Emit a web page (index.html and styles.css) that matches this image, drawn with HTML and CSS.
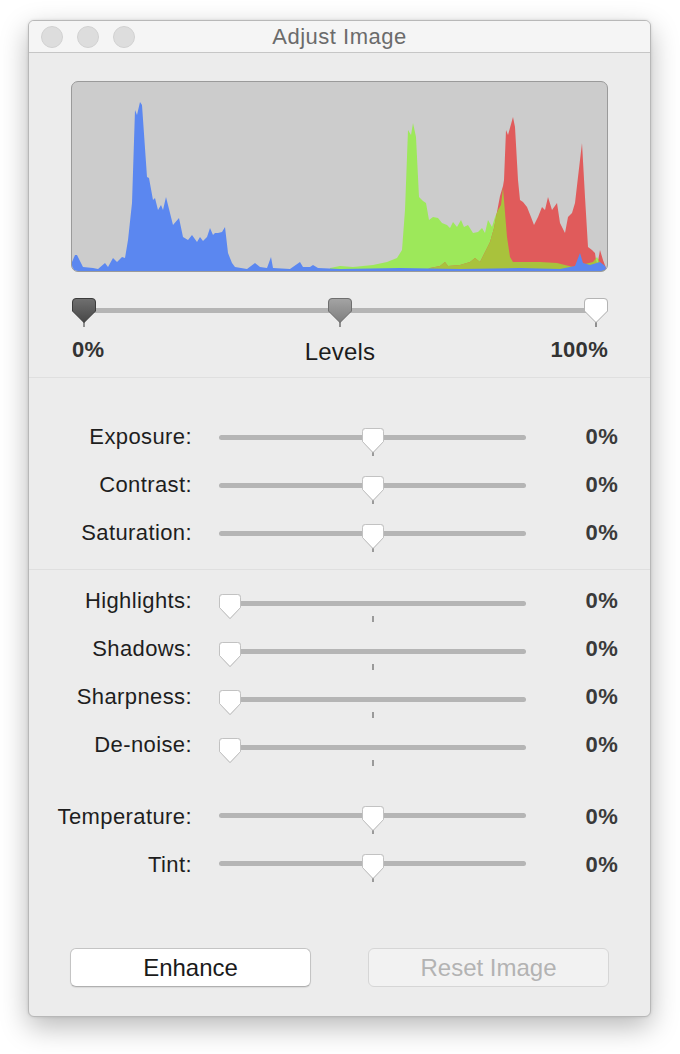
FILE: index.html
```html
<!DOCTYPE html>
<html>
<head>
<meta charset="utf-8">
<title>Adjust Image</title>
<link rel="stylesheet" href="styles.css">
</head>
<body>
<div class="window">
  <div class="titlebar">
    <div class="lights"><span class="light"></span><span class="light"></span><span class="light"></span></div>
    <div class="title">Adjust Image</div>
    <div></div>
  </div>

  <div class="histogram">
    <svg class="hist-svg" viewBox="72 82 535 189" preserveAspectRatio="none">
      <defs>
        <clipPath id="redclip">
          <path d="M425,271 L430,268 L440,266 L445,262 L448,266 L460,265 L470,262 L475,258 L480,262 L485,252 L490,242 L494,228 L497,212 L500,196 L503,186 L504,180 L506,130 L508,135 L513,117 L515,127 L518,180 L520,200 L523,202 L527,207 L531,217 L534,225 L538,217 L542,207 L545,210 L548,197 L552,210 L557,203 L560,223 L565,233 L568,217 L572,213 L575,203 L578,177 L582,143 L585,197 L588,247 L592,250 L595,253 L597,267 L600,250 L603,260 L606,268 L607,271 Z"/>
        </clipPath>
      </defs>
      <path fill="#9de85a" d="M330,271 L330,268 L340,266 L353,267 L373,265 L387,262 L397,258 L402,250 L405,210 L408,130 L411,135 L413,123 L416,137 L419,197 L423,201 L426,203 L429,220 L433,217 L438,218 L442,223 L447,225 L450,228 L453,222 L457,227 L461,220 L464,227 L468,225 L473,233 L478,232 L482,228 L485,233 L488,220 L492,227 L495,217 L498,210 L501,205 L503,188 L507,237 L510,257 L513,262 L540,262 L557,263 L573,267 L593,262 L597,257 L603,268 L605,271 Z"/>
      <path fill="#e05b5b" d="M425,271 L430,268 L440,266 L445,262 L448,266 L460,265 L470,262 L475,258 L480,262 L485,252 L490,242 L494,228 L497,212 L500,196 L503,186 L504,180 L506,130 L508,135 L513,117 L515,127 L518,180 L520,200 L523,202 L527,207 L531,217 L534,225 L538,217 L542,207 L545,210 L548,197 L552,210 L557,203 L560,223 L565,233 L568,217 L572,213 L575,203 L578,177 L582,143 L585,197 L588,247 L592,250 L595,253 L597,267 L600,250 L603,260 L606,268 L607,271 Z"/>
      <path fill="#a9c23c" clip-path="url(#redclip)" d="M330,271 L330,268 L340,266 L353,267 L373,265 L387,262 L397,258 L402,250 L405,210 L408,130 L411,135 L413,123 L416,137 L419,197 L423,201 L426,203 L429,220 L433,217 L438,218 L442,223 L447,225 L450,228 L453,222 L457,227 L461,220 L464,227 L468,225 L473,233 L478,232 L482,228 L485,233 L488,220 L492,227 L495,217 L498,210 L501,205 L503,188 L507,237 L510,257 L513,262 L540,262 L557,263 L573,267 L593,262 L597,257 L603,268 L605,271 Z"/>
      <path fill="#5b87f0" d="M72,271 L72,262 L75,255 L77,255 L83,267 L93,268 L98,269 L105,263 L108,267 L113,258 L117,262 L122,257 L125,258 L128,240 L132,203 L135,110 L137,115 L140,102 L142,105 L147,177 L149,178 L153,200 L155,198 L158,210 L161,205 L163,210 L166,197 L170,213 L173,225 L179,218 L183,237 L188,240 L192,235 L197,242 L200,237 L203,241 L207,237 L210,228 L213,235 L215,233 L218,233 L222,232 L225,227 L228,253 L232,263 L235,267 L247,269 L255,263 L260,267 L267,268 L271,257 L273,268 L290,269 L300,262 L303,267 L310,267 L313,265 L318,268 L340,269 L400,268 L460,269 L520,268 L560,269 L575,266 L580,253 L583,263 L590,265 L600,262 L605,266 L607,270 L607,271 Z"/>
    </svg>
  </div>

  <div class="levels">
    <div class="levels-slider">
      <div class="levels-track"></div>
      <span class="lv-tick lv-pos-min"></span>
      <span class="lv-tick lv-pos-mid"></span>
      <span class="lv-tick lv-pos-max"></span>
      <svg class="lv-thumb lv-pos-min" viewBox="0 0 24 25"><defs><linearGradient id="gd" x1="0" y1="0" x2="0" y2="1"><stop offset="0" stop-color="#707070"/><stop offset="1" stop-color="#474747"/></linearGradient></defs><path d="M4 .5H20A3.5 3.5 0 0 1 23.5 4V13L12 24.5 .5 13V4A3.5 3.5 0 0 1 4 .5Z" fill="url(#gd)" stroke="#3c3c3c"/></svg>
      <svg class="lv-thumb lv-pos-mid" viewBox="0 0 24 25"><defs><linearGradient id="gm" x1="0" y1="0" x2="0" y2="1"><stop offset="0" stop-color="#a4a4a4"/><stop offset="1" stop-color="#7e7e7e"/></linearGradient></defs><path d="M4 .5H20A3.5 3.5 0 0 1 23.5 4V13L12 24.5 .5 13V4A3.5 3.5 0 0 1 4 .5Z" fill="url(#gm)" stroke="#6f6f6f"/></svg>
      <svg class="lv-thumb lv-pos-max" viewBox="0 0 24 25"><path d="M4 .5H20A3.5 3.5 0 0 1 23.5 4V13L12 24.5 .5 13V4A3.5 3.5 0 0 1 4 .5Z" fill="#ffffff" stroke="#b4b4b4"/></svg>
    </div>
    <div class="levels-labels">
      <span class="lv-val">0%</span>
      <span class="lv-name">Levels</span>
      <span class="lv-val lv-right">100%</span>
    </div>
  </div>

  <div class="sep"></div>

  <div class="section s1">
    <div class="row"><span class="label">Exposure:</span><div class="slider"><div class="track"></div><span class="tick"></span><svg class="thumb thumb-mid" viewBox="0 0 22 25"><path d="M3.5 .5H18.5A3 3 0 0 1 21.5 3.5V13.5L11 24.5 .5 13.5V3.5A3 3 0 0 1 3.5 .5Z"/></svg></div><span class="value">0%</span></div>
    <div class="row"><span class="label">Contrast:</span><div class="slider"><div class="track"></div><span class="tick"></span><svg class="thumb thumb-mid" viewBox="0 0 22 25"><path d="M3.5 .5H18.5A3 3 0 0 1 21.5 3.5V13.5L11 24.5 .5 13.5V3.5A3 3 0 0 1 3.5 .5Z"/></svg></div><span class="value">0%</span></div>
    <div class="row"><span class="label">Saturation:</span><div class="slider"><div class="track"></div><span class="tick"></span><svg class="thumb thumb-mid" viewBox="0 0 22 25"><path d="M3.5 .5H18.5A3 3 0 0 1 21.5 3.5V13.5L11 24.5 .5 13.5V3.5A3 3 0 0 1 3.5 .5Z"/></svg></div><span class="value">0%</span></div>
  </div>

  <div class="sep"></div>

  <div class="section s2">
    <div class="row"><span class="label">Highlights:</span><div class="slider"><div class="track"></div><span class="tick"></span><svg class="thumb thumb-min" viewBox="0 0 22 25"><path d="M3.5 .5H18.5A3 3 0 0 1 21.5 3.5V13.5L11 24.5 .5 13.5V3.5A3 3 0 0 1 3.5 .5Z"/></svg></div><span class="value">0%</span></div>
    <div class="row"><span class="label">Shadows:</span><div class="slider"><div class="track"></div><span class="tick"></span><svg class="thumb thumb-min" viewBox="0 0 22 25"><path d="M3.5 .5H18.5A3 3 0 0 1 21.5 3.5V13.5L11 24.5 .5 13.5V3.5A3 3 0 0 1 3.5 .5Z"/></svg></div><span class="value">0%</span></div>
    <div class="row"><span class="label">Sharpness:</span><div class="slider"><div class="track"></div><span class="tick"></span><svg class="thumb thumb-min" viewBox="0 0 22 25"><path d="M3.5 .5H18.5A3 3 0 0 1 21.5 3.5V13.5L11 24.5 .5 13.5V3.5A3 3 0 0 1 3.5 .5Z"/></svg></div><span class="value">0%</span></div>
    <div class="row"><span class="label">De-noise:</span><div class="slider"><div class="track"></div><span class="tick"></span><svg class="thumb thumb-min" viewBox="0 0 22 25"><path d="M3.5 .5H18.5A3 3 0 0 1 21.5 3.5V13.5L11 24.5 .5 13.5V3.5A3 3 0 0 1 3.5 .5Z"/></svg></div><span class="value">0%</span></div>
  </div>

  <div class="section s3">
    <div class="row"><span class="label">Temperature:</span><div class="slider"><div class="track"></div><span class="tick"></span><svg class="thumb thumb-mid" viewBox="0 0 22 25"><path d="M3.5 .5H18.5A3 3 0 0 1 21.5 3.5V13.5L11 24.5 .5 13.5V3.5A3 3 0 0 1 3.5 .5Z"/></svg></div><span class="value">0%</span></div>
    <div class="row"><span class="label">Tint:</span><div class="slider"><div class="track"></div><span class="tick"></span><svg class="thumb thumb-mid" viewBox="0 0 22 25"><path d="M3.5 .5H18.5A3 3 0 0 1 21.5 3.5V13.5L11 24.5 .5 13.5V3.5A3 3 0 0 1 3.5 .5Z"/></svg></div><span class="value">0%</span></div>
  </div>

  <div class="buttons">
    <button class="btn">Enhance</button>
    <button class="btn btn-disabled" disabled>Reset Image</button>
  </div>
</div>
</body>
</html>
```

FILE: styles.css
```css
* { box-sizing: border-box; }

html, body {
  margin: 0;
  padding: 0;
  background: #ffffff;
}

body {
  font-family: "Liberation Sans", Arial, sans-serif;
  padding: 20px 0 37px 28px;
}

.window {
  width: 623px;
  height: 997px;
  background: #ececec;
  border: 1px solid #b8b8b8;
  border-radius: 6px;
  overflow: hidden;
  box-shadow: 0 10px 28px rgba(0, 0, 0, 0.28), 0 0 3px rgba(0, 0, 0, 0.12);
  display: flex;
  flex-direction: column;
}

/* Title bar */
.titlebar {
  height: 32px;
  flex: none;
  background: #f5f5f5;
  border-bottom: 1px solid #c6c6c6;
  display: grid;
  grid-template-columns: 1fr auto 1fr;
  align-items: center;
}

.lights {
  display: flex;
  gap: 14px;
  padding-left: 12px;
}

.light {
  width: 22px;
  height: 22px;
  border-radius: 50%;
  background: #dddddd;
  border: 1px solid #d1d1d1;
}

.title {
  font-size: 22px;
  color: #6b6b6b;
  letter-spacing: 0.5px;
  line-height: 31px;
}

/* Histogram */
.histogram {
  flex: none;
  margin: 28px 42px 0 42px;
  height: 191px;
  background: #cccccc;
  border: 1px solid #9a9a9a;
  border-radius: 7px;
  overflow: hidden;
}

.hist-svg {
  display: block;
  width: 100%;
  height: 100%;
}

/* Levels */
.levels {
  flex: none;
  margin: 26px 0 0 43px;
  width: 536px;
}

.levels-slider {
  position: relative;
  height: 29px;
  padding: 10px 12px 0 12px;
}

.levels-track {
  height: 5px;
  background: #b5b5b5;
  border-radius: 3px;
}

.lv-thumb {
  position: absolute;
  top: 0;
  width: 24px;
  height: 25px;
  filter: drop-shadow(0 0.5px 0.5px rgba(0, 0, 0, 0.15));
}

.lv-tick {
  position: absolute;
  top: 23px;
  width: 2px;
  height: 6px;
  margin-left: 11px;
  background: #8f8f8f;
}

.lv-pos-min { left: 0; }
.lv-pos-mid { left: calc(50% - 12px); }
.lv-pos-max { left: calc(100% - 24px); }

.levels-labels {
  display: grid;
  grid-template-columns: 1fr auto 1fr;
  align-items: center;
  height: 28px;
  margin: 6px 0 16px 0;
}

.lv-val {
  font-size: 22px;
  font-weight: bold;
  color: #333333;
  letter-spacing: 0.3px;
}

.lv-right { justify-self: end; }

.lv-name {
  font-size: 24px;
  color: #1c1c1c;
  padding-top: 5px;
  letter-spacing: 0.2px;
}

.sep {
  flex: none;
  height: 1px;
  background: #dfdfdf;
}

/* Slider rows */
.section {
  flex: none;
  --tt: 22px;
}

.s1 { padding: 35px 0 12px 0; --tt: 22px; }
.s2 { padding: 7px 0 0 0; --tt: 24px; }
.s3 { padding: 24px 0 0 0; --tt: 20px; }

.row {
  display: grid;
  grid-template-columns: 163px 307px 65px;
  column-gap: 27px;
  height: 48px;
  align-items: center;
}

.label {
  justify-self: end;
  font-size: 22px;
  color: #1e1e1e;
  letter-spacing: 0.4px;
}

.value {
  justify-self: end;
  font-size: 22px;
  font-weight: bold;
  color: #3a3a3a;
  letter-spacing: 0.3px;
}

.slider {
  position: relative;
  height: 48px;
  padding-top: var(--tt);
}

.track {
  height: 5px;
  background: #b5b5b5;
  border-radius: 3px;
}

.tick {
  position: absolute;
  left: calc(50% - 1px);
  top: calc(var(--tt) + 15px);
  width: 2px;
  height: 6px;
  background: #9a9a9a;
}

.thumb {
  position: absolute;
  top: calc(var(--tt) - 7px);
  width: 22px;
  height: 25px;
  filter: drop-shadow(0 0.5px 0.6px rgba(0, 0, 0, 0.22));
}

.thumb path {
  fill: #ffffff;
  stroke: #c2c2c2;
  stroke-width: 1;
}

.thumb-mid { left: calc(50% - 11px); }
.thumb-min { left: 0; }

/* Buttons */
.buttons {
  flex: none;
  display: flex;
  gap: 57px;
  padding: 0 41px;
  margin-top: 59px;
}

.btn {
  flex: 1;
  height: 39px;
  font-family: "Liberation Sans", Arial, sans-serif;
  font-size: 24px;
  color: #1a1a1a;
  background: #ffffff;
  border: 1px solid #c4c4c4;
  border-bottom-color: #b0b0b0;
  border-radius: 6px;
  box-shadow: 0 1px 1px rgba(0, 0, 0, 0.08);
  padding: 0;
}

.btn-disabled {
  color: #b3b3b3;
  background: #f2f2f2;
  border: 1px solid #d6d6d6;
  box-shadow: none;
}
```
